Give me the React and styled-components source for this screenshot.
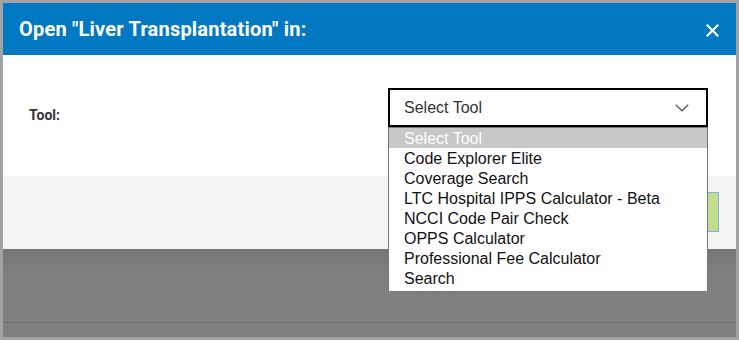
import React from 'react';
import styled, { createGlobalStyle } from 'styled-components';

const GlobalStyle = createGlobalStyle`
  html, body {
    margin: 0;
    padding: 0;
    background: #a3a3a3;
  }
  * {
    box-sizing: border-box;
  }
`;

const Frame = styled.div`
  width: 739px;
  height: 340px;
  border: 3px solid #a3a3a3;
  display: flex;
  flex-direction: column;
  position: relative;
  overflow: hidden;
`;

const Header = styled.header`
  height: 52px;
  background-color: #0079c2;
  display: flex;
  align-items: center;
  justify-content: space-between;
  padding: 0 17px 0 16px;
`;

const Title = styled.h1`
  margin: 0;
  font-family: Roboto, "Liberation Sans", sans-serif;
  font-weight: 700;
  font-size: 20px;
  color: #fff;
  letter-spacing: 0.2px;
`;

const Close = styled.button`
  border: 0;
  padding: 0;
  background: none;
  width: 13px;
  height: 13px;
  display: flex;
  margin-top: 2px;
`;

const Body = styled.section`
  height: 121px;
  background: #fff;
  display: flex;
  align-items: flex-start;
  padding: 33px 0 0 26px;
`;

const Label = styled.label`
  width: 359px;
  margin-top: 19px;
  font-family: Roboto, "Liberation Sans", sans-serif;
  font-weight: 700;
  font-size: 14px;
  color: #333;
`;

const SelectWrap = styled.div`
  position: relative;
  width: 320px;
`;

const SelectBox = styled.div`
  height: 39px;
  border: 2px solid #000;
  display: flex;
  align-items: center;
  justify-content: space-between;
  padding: 0 17px 0 14px;
  font-family: "Liberation Sans", Arial, sans-serif;
  font-size: 16px;
  color: #333;
  background: #fff;
`;

const List = styled.ul`
  position: absolute;
  top: 39px;
  left: 0;
  width: 320px;
  margin: 0;
  padding: 0 0 3px;
  list-style: none;
  background: #fff;
  border: 1px solid #767676;
  z-index: 5;
`;

const Option = styled.li`
  height: 20px;
  line-height: 21px;
  padding-left: 15px;
  font-family: "Liberation Sans", Arial, sans-serif;
  font-size: 16px;
  color: ${({ selected }) => (selected ? '#fff' : '#111')};
  background: ${({ selected }) => (selected ? '#c8c8c8' : 'transparent')};
  white-space: nowrap;
`;

const Footer = styled.footer`
  height: 73px;
  background: #f4f4f4;
  display: flex;
  justify-content: flex-end;
  align-items: flex-start;
  padding: 16px 17px 0 0;
`;

const SaveButton = styled.button`
  width: 100px;
  height: 40px;
  background: #c3dc8d;
  border: 1px solid #7cb6e4;
`;

const Backdrop = styled.div`
  flex: 1;
  display: flex;
  flex-direction: column;
  background: linear-gradient(#757575, #7f7f7f 24px, #808080);
`;

const BackdropTop = styled.div`
  height: 74px;
  border-bottom: 1px solid #6c6c6c;
`;

const tools = [
  'Select Tool',
  'Code Explorer Elite',
  'Coverage Search',
  'LTC Hospital IPPS Calculator - Beta',
  'NCCI Code Pair Check',
  'OPPS Calculator',
  'Professional Fee Calculator',
  'Search',
];

export default function App() {
  return (
    <>
      <GlobalStyle />
      <Frame>
        <Header>
          <Title>Open "Liver Transplantation" in:</Title>
          <Close aria-label="Close">
            <svg width="13" height="13" viewBox="0 0 13 13">
              <path d="M1.5 1.5 L11.5 11.5 M11.5 1.5 L1.5 11.5" stroke="#fff" strokeWidth="2.2" strokeLinecap="square" />
            </svg>
          </Close>
        </Header>
        <Body>
          <Label>Tool:</Label>
          <SelectWrap>
            <SelectBox>
              <span>Select Tool</span>
              <svg width="14" height="8" viewBox="0 0 14 8">
                <path d="M0.8 0.8 L7 6.8 L13.2 0.8" fill="none" stroke="#555" strokeWidth="1.2" />
              </svg>
            </SelectBox>
            <List>
              {tools.map((t, i) => (
                <Option key={t} selected={i === 0}>{t}</Option>
              ))}
            </List>
          </SelectWrap>
        </Body>
        <Footer>
          <SaveButton />
        </Footer>
        <Backdrop>
          <BackdropTop />
        </Backdrop>
      </Frame>
    </>
  );
}
